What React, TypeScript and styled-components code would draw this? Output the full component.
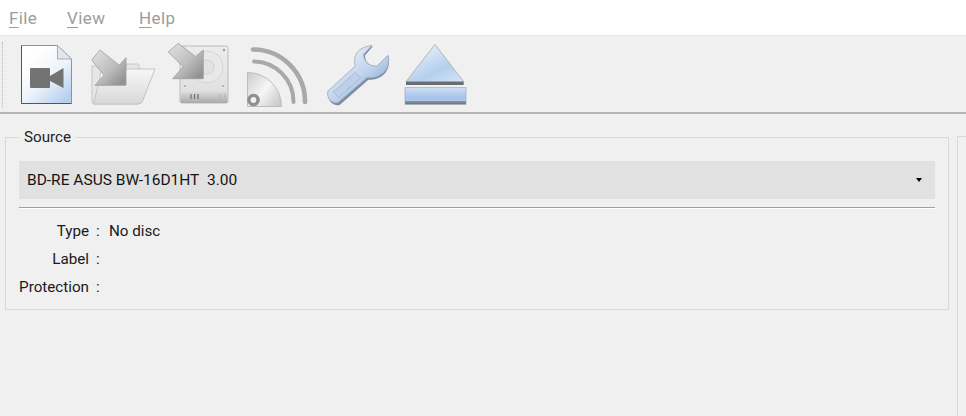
import React from "react";
import styled, { createGlobalStyle } from "styled-components";

const Global = createGlobalStyle`
  html, body { margin: 0; padding: 0; background: #f0f0f0; }
  body { font-family: Roboto, "Liberation Sans", sans-serif; color: #1a1a1a; overflow: hidden; }
  #root { height: 416px; }
`;
const Page = styled.div`height: 416px; width: 966px; display: flex; flex-direction: column; overflow: hidden;`;
const MenuBar = styled.nav`
  height: 35px; background: #fff; border-bottom: 1px solid #e6e6e6; display: flex; align-items: center;
  padding: 0 0 0 9px; gap: 33px; box-sizing: content-box;
`;
const MenuItem = styled.span`
  font-size: 17px; color: #9c9c9c; letter-spacing: .4px; width: ${p => p.$w}px;
  u { text-underline-offset: 3px; text-decoration-thickness: 1px; }
`;
const ToolBar = styled.div`
  height: 78px; box-sizing: border-box; border-bottom: 2px solid #b4b4b4; display: flex; align-items: flex-start;
  padding: 6px 0 0 2px; background: #f0f0f0;
`;
const Handle = styled.div`width: 0; height: 66px; border-left: 1px dotted #b9b9b9; margin-right: 11px;`;
const Tools = styled.div`display: flex; gap: 14px;`;
const Icon = styled.svg`width: 64px; height: 64px; overflow: visible; display: block;`;
const Main = styled.main`flex: 1; display: flex; gap: 8px; padding: 14px 0 0 5px; min-height: 0;`;
const Group = styled.fieldset`
  width: 944px; height: 182px; box-sizing: border-box; margin: 0; padding: 15px 13px 0 13px; flex: none;
  border: 1px solid #d9d9d9; min-inline-size: 0;
`;
const Legend = styled.legend`font-size: 15.2px; margin-left: 0; padding: 0 5px; line-height: 18px; color: #222;`;
const Combo = styled.div`
  height: 38px; background: #e1e1e1; display: flex; align-items: center; justify-content: space-between;
  padding: 0 13px 0 8px; font-size: 15.5px; color: #151515;
`;
const Caret = styled.i`width: 0; height: 0; border: 3px solid transparent; border-top: 4px solid #000; border-bottom: 0;`;
const Rule = styled.hr`height: 1px; background: #a0a0a0; border: 0; border-bottom: 1px solid #fff; margin: 8px 0 0 0;`;
const Info = styled.dl`
  display: grid; grid-template-columns: 70px 6px 1fr; column-gap: 7px; margin: 8px 0 0 0; grid-auto-rows: 28px;
  align-items: center; font-size: 15.2px;
  dt { text-align: right; } dd { margin: 0; }
`;
const Side = styled.aside`flex: 1; border: 1px solid #d9d9d9; border-right: 0; border-bottom: 0; margin-top: 8px;`;

const Arrow = ({ pts, id }: { pts: string; id: string }) => (
  <>
    <defs>
      <linearGradient id={id} x1="0.1" y1="0.1" x2="0.9" y2="0.9">
        <stop offset="0" stopColor="#dcdcdc" />
        <stop offset=".55" stopColor="#bebebe" />
        <stop offset="1" stopColor="#929292" />
      </linearGradient>
    </defs>
    <polygon points={pts} fill={`url(#${id})`} stroke="#9c9c9c" strokeWidth=".8" strokeLinejoin="round" />
  </>
);

const FileIcon = () => (
  <Icon viewBox="0 0 64 64">
    <defs>
      <linearGradient id="pg" x1="0.2" y1="0.2" x2="0.8" y2="1">
        <stop offset="0" stopColor="#fff" />
        <stop offset=".5" stopColor="#eef3fa" />
        <stop offset="1" stopColor="#b6d0ee" />
      </linearGradient>
    </defs>
    <path d="M7.5 3.5H43.5L57.5 17V61.5H7.5Z" fill="url(#pg)" stroke="#8793a6" />
    <path d="M7.5 3.5V61.5H57.5" fill="none" stroke="#4c5668" />
    <path d="M43.5 3.5V17H57.5Z" fill="#e3e6ea" stroke="#a7aeb8" />
    <rect x="16" y="26" width="20" height="20" rx="1" fill="#737373" />
    <path d="M36 34L49.5 26V46L36 39Z" fill="#737373" />
  </Icon>
);
const FolderIcon = () => (
  <Icon viewBox="0 0 64 64">
    <defs>
      <linearGradient id="fg" x1="0" y1="0" x2="0" y2="1">
        <stop offset="0" stopColor="#f7f7f7" />
        <stop offset="1" stopColor="#d8d8d8" />
      </linearGradient>
    </defs>
    <path d="M0 24H34V22H46Q47 22 47 24V27H50V50L47 62H3Q0 62 0 59Z" fill="#e6e6e6" stroke="#c6c6c6" />
    <path d="M8 35Q8 27 14 27H63L51 58Q50 62 46 62H1Q1 62 3 56Z" fill="url(#fg)" stroke="#c4c4c4" />
    <Arrow id="a1" pts="8,8 27.3,23.3 34,15.7 34,43.3 3,43.3 12,33.3 -0.3,18" />
  </Icon>
);
const DriveIcon = () => (
  <Icon viewBox="0 0 64 64">
    <defs>
      <linearGradient id="dg" x1="0" y1="0" x2="0" y2="1">
        <stop offset="0" stopColor="#ececec" />
        <stop offset="1" stopColor="#dedede" />
      </linearGradient>
      <linearGradient id="ds" x1="0" y1="0" x2="0" y2="1">
        <stop offset="0" stopColor="#dedede" />
        <stop offset="1" stopColor="#a9a9a9" />
      </linearGradient>
    </defs>
    <rect x="10" y="4" width="48" height="57" rx="2" fill="url(#dg)" stroke="#bcbcbc" />
    <circle cx="37" cy="25" r="16" fill="#e8e8e8" stroke="#d6d6d6" />
    <circle cx="37" cy="25" r="7" fill="#e2e2e2" stroke="#d2d2d2" />
    <rect x="10.5" y="49" width="47" height="12" rx="1" fill="url(#ds)" />
    <path d="M21 52v5M24.5 52v5M28 52v5" stroke="#6f6f6f" strokeWidth="1.2" />
    <path d="M50 52v5M55 52v5" stroke="#b5b5b5" strokeWidth="1" />
    <circle cx="15" cy="44" r="1" fill="#aaa" /><circle cx="53" cy="44" r="1" fill="#aaa" /><circle cx="54" cy="8" r="1.2" fill="#999" />
    <Arrow id="a2" pts="8.3,1.3 25.7,14.7 33.3,8 33.3,36.7 2.7,36.7 13.3,24.7 -1.7,10" />
  </Icon>
);
const WirelessIcon = () => (
  <Icon viewBox="0 0 64 64">
    <defs>
      <linearGradient id="cd" x1="0" y1="0.1" x2="1" y2="0.9">
        <stop offset="0" stopColor="#cfcfcf" />
        <stop offset=".5" stopColor="#f6f6f6" />
        <stop offset="1" stopColor="#c8c8c8" />
      </linearGradient>
    </defs>
    <path d="M5 7.5A52 52 0 0 1 57 60" fill="none" stroke="#a9a9a9" strokeWidth="4.6" strokeLinecap="round" />
    <path d="M6 19.5A40 40 0 0 1 45.5 60" fill="none" stroke="#a9a9a9" strokeWidth="4" strokeLinecap="round" />
    <path d="M-.5 30.5A34 34 0 0 1 33.5 64.5H-.5Z" fill="url(#cd)" stroke="#bdbdbd" />
    <circle cx="5.5" cy="58" r="4.6" fill="#f2f2f2" stroke="#8f8f8f" strokeWidth="3.4" />
  </Icon>
);
const WrenchIcon = () => (
  <Icon viewBox="0 0 64 64">
    <defs>
      <linearGradient id="wg" x1="0.1" y1="0.1" x2="0.8" y2="0.9">
        <stop offset="0" stopColor="#eef3f9" />
        <stop offset=".55" stopColor="#c3d6ee" />
        <stop offset="1" stopColor="#88a9d2" />
      </linearGradient>
    </defs>
    <g transform="translate(-4 -6) scale(.3333)">
      <path d="M20 170L104 94C96 60 110 34 152 28L128 55C128 76 142 92 166 88L198 58C208 98 180 132 138 128L52 204C32 208 14 190 20 170Z" fill="#7d8ba0" transform="translate(1 3)" />
      <path d="M18 165L100 90C92 60 105 35 150 28L125 55C125 75 140 92 165 90L198 58C208 95 180 130 135 125L48 200C30 205 12 185 18 165Z" fill="url(#wg)" stroke="#9aa9bd" strokeWidth="2.5" strokeLinejoin="round" />
      <path d="M34 168L100 110L116 125L50 184Z" fill="#bdd0e8" stroke="#a3b7d1" strokeWidth="2.5" />
    </g>
  </Icon>
);
const EjectIcon = () => (
  <Icon viewBox="0 0 64 64">
    <defs>
      <linearGradient id="eg" x1="0.1" y1="0" x2="0.9" y2="1">
        <stop offset="0" stopColor="#f2f6fb" />
        <stop offset=".65" stopColor="#b5cfee" />
        <stop offset="1" stopColor="#d3e2f4" />
      </linearGradient>
      <linearGradient id="eb" x1="0" y1="0" x2="0" y2="1">
        <stop offset="0" stopColor="#cfe0f5" />
        <stop offset=".55" stopColor="#a9c5ea" />
        <stop offset=".8" stopColor="#a9c5ea" />
        <stop offset=".81" stopColor="#8d97a4" />
        <stop offset="1" stopColor="#6a6f76" />
      </linearGradient>
    </defs>
    <path d="M31 2.5L2 39.7H59.7Z" fill="url(#eg)" stroke="#a2a8b0" strokeWidth=".8" />
    <rect x="2" y="39.7" width="57.7" height="3.3" fill="#686d74" />
    <rect x="1" y="45.7" width="61" height="16.6" fill="url(#eb)" stroke="#9ba2ab" strokeWidth=".6" />
  </Icon>
);

export default function App() {
  return (
    <Page>
      <Global />
      <MenuBar>
        <MenuItem $w={25}><u>F</u>ile</MenuItem>
        <MenuItem $w={39}><u>V</u>iew</MenuItem>
        <MenuItem $w={37}><u>H</u>elp</MenuItem>
      </MenuBar>
      <ToolBar>
        <Handle />
        <Tools>
          <FileIcon /><FolderIcon /><DriveIcon /><WirelessIcon /><WrenchIcon /><EjectIcon />
        </Tools>
      </ToolBar>
      <Main>
        <Group>
          <Legend>Source</Legend>
          <Combo>BD-RE ASUS BW-16D1HT&nbsp; 3.00<Caret /></Combo>
          <Rule />
          <Info>
            <dt>Type</dt><span>:</span><dd>No disc</dd>
            <dt>Label</dt><span>:</span><dd></dd>
            <dt>Protection</dt><span>:</span><dd></dd>
          </Info>
        </Group>
        <Side />
      </Main>
    </Page>
  );
}
